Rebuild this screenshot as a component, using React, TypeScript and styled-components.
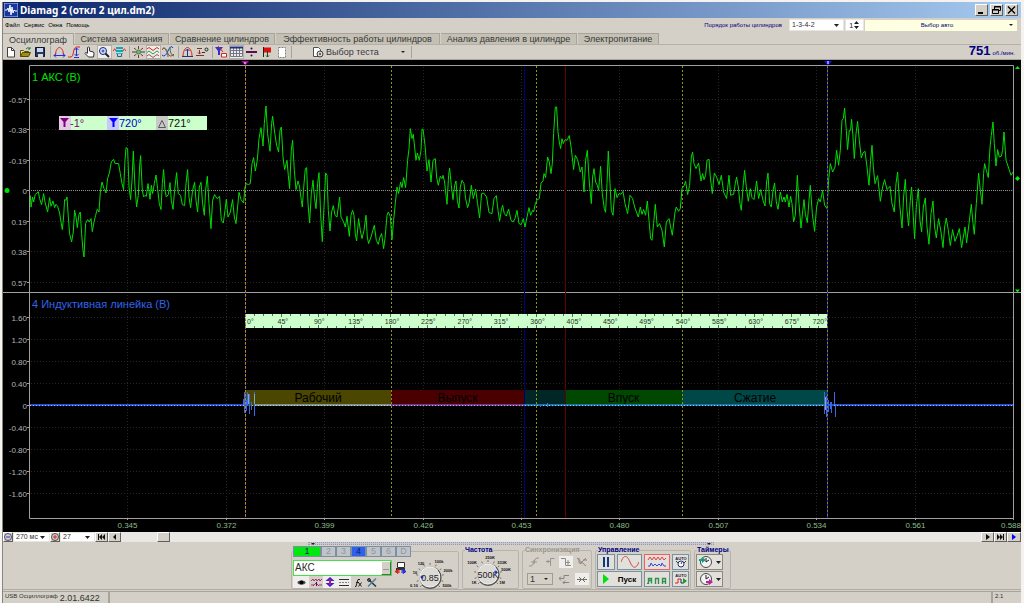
import React from "react";
import styled, { createGlobalStyle, css } from "styled-components";

const face = "#d4d0c8";
const navy = "#000080";
const sans = `"Liberation Sans", Arial, sans-serif`;

const GlobalStyle = createGlobalStyle`
  *, *::before, *::after { box-sizing: border-box; }
  body { margin: 0; background: #f4f3f0; font-family: ${sans}; color: #000; }
  button, input, select { font-family: inherit; color: inherit; margin: 0; border-radius: 0; }
  button { padding: 0; }
`;

const raised = css`
  background: ${face};
  border: 1px solid;
  border-color: #fff #606060 #606060 #fff;
`;

const Center = css`
  display: flex;
  align-items: center;
  justify-content: center;
`;

const Window = styled.div`
  margin: 2px 3px 0 2px;
  border-left: 1px solid #86847e;
  background: ${face};
`;

/* ---------- title and menu ---------- */

const TitleBar = styled.header`
  display: flex;
  align-items: center;
  gap: 2px;
  height: 16px;
  padding: 0 3px 0 1px;
  background: linear-gradient(90deg, #0a246a, #a6caf0);
`;

const Title = styled.h1`
  flex: 1;
  margin: 0;
  color: #fff;
  font: 700 10px/14px "Noto Sans", ${sans};
`;

const CaptionButtons = styled.div`
  display: flex;
  gap: 2px;
`;

const CaptionButton = styled.button`
  ${raised}
  ${Center}
  width: 13px;
  height: 12px;
`;

const MenuRow = styled.div`
  display: flex;
  justify-content: space-between;
  height: 15px;
  padding: 1px 4px 0 2px;
`;

const MenuBar = styled.nav`
  display: flex;
  align-items: center;
  gap: 4px;
  height: 12px;
`;

const MenuItem = styled.button`
  border: 0;
  background: none;
  font-size: 6px;
  line-height: 8px;
`;

const EngineBar = styled.div`
  display: flex;
  align-items: center;
  gap: 1px;
  height: 12px;
  color: ${navy};
`;

const EngineLabel = styled.label`
  margin-right: 6px;
  font-size: 6px;
  line-height: 8px;
`;

const Combo = styled.div<{ $w: number; $h: number; $flat?: boolean }>`
  display: grid;
  align-items: center;
  width: ${(p) => p.$w}px;
  height: ${(p) => p.$h}px;
  background: ${(p) => (p.$flat ? face : "#fff")};
  border: ${(p) => (p.$flat ? "1px solid #a09c94" : "1px solid #e8e6e0")};
  > * { grid-area: 1 / 1; }
  > svg { justify-self: end; margin-right: 4px; pointer-events: none; }
`;

const Select = styled.select<{ $size: number }>`
  width: 100%;
  padding: 0 2px;
  border: 0;
  outline: 0;
  background: none;
  appearance: none;
  font-size: ${(p) => p.$size}px;
  line-height: 8px;
  color: #303030;
`;

const Spin = styled.input`
  width: 100%;
  padding: 0 3px;
  border: 0;
  background: none;
  appearance: textfield;
  font-size: 8px;
  line-height: 9px;
  color: #303030;
  &::-webkit-inner-spin-button { appearance: none; }
`;

const CarButton = styled.button`
  display: grid;
  grid-template-columns: 1fr 8px;
  align-items: center;
  width: 152px;
  height: 11px;
  border: 0;
  background: #ffffe1;
  color: ${navy};
  font-size: 6px;
  line-height: 8px;
`;

/* ---------- tabs and toolbar ---------- */

const Tabs = styled.div`
  display: flex;
  align-items: flex-end;
  gap: 1px;
  height: 12px;
  border-bottom: 1px solid #b4b0a8;
`;

const Tab = styled.button<{ $w: number; $on?: boolean }>`
  width: ${(p) => p.$w}px;
  height: ${(p) => (p.$on ? 12 : 11)}px;
  margin-bottom: ${(p) => (p.$on ? -1 : 0)}px;
  border: solid #a8a49c;
  border-width: 1px 1px 0 0;
  background: ${(p) => (p.$on ? face : "#c4c0b4")};
  color: #383838;
  font-size: 9px;
  line-height: 10px;
  white-space: nowrap;
`;

const Toolbar = styled.div`
  display: flex;
  align-items: center;
  height: 15px;
  border-bottom: 1px solid #aaa69e;
`;

const Tool = styled.button<{ $on?: boolean }>`
  ${Center}
  width: 15px;
  height: 14px;
  border: ${(p) => (p.$on ? "1px solid #b4b0a8" : "0")};
  background: ${(p) => (p.$on ? "#eeedea" : "none")};
`;

const Divider = styled.span`
  width: 1px;
  height: 12px;
  margin: 0 1px 0 2px;
  background: #a8a49c;
`;

const TestButton = styled.button`
  display: flex;
  align-items: center;
  gap: 2px;
  width: 116px;
  height: 14px;
  padding: 0 4px 0 19px;
  border: 0;
  background: none;
  color: #383838;
  font-size: 9px;
  line-height: 11px;
  > :last-child { margin-left: auto; }
`;

const Rpm = styled.output`
  display: flex;
  align-items: baseline;
  gap: 2px;
  margin-left: auto;
  padding-right: 6px;
  color: ${navy};
  font-size: 6px;
  line-height: 14px;
  b { font-size: 13px; }
`;

/* ---------- chart ---------- */

const Chart = styled.svg`
  display: block;
  width: 100%;
  height: auto;
  background: #000;
  font-family: ${sans};
`;

const YLabel = styled.text`
  font-size: 8px;
  fill: #b4b4b4;
  text-anchor: end;
`;

const XLabel = styled.text`
  font-size: 8px;
  fill: #8cbc8c;
`;

const ChannelLabel = styled.text`
  font-size: 11px;
`;

const BandLabel = styled.text`
  font-size: 12px;
  text-anchor: middle;
`;

const RulerLabel = styled.text`
  font-size: 7px;
  fill: #203020;
`;

const ReadoutLabel = styled.text`
  font-size: 11px;
`;

// Samples are stored in thirds of a unit, in three blocks with their own start.
const blocks: [number, string][] = [
  [0, "90,405 92,440 97,410 100,425 105,402 110,398 114,394 118,415 124,433 130,400 134,425 142,455 148,412 152,438 158,422 163,442 167,432 172,438 178,458 182,485 186,508 190,470 193,418 197,420 200,410 204,470 208,520 214,545 219,515 223,450 227,470 231,502 236,462 240,455 244,520 248,570 251,590 256,490 262,478 267,485 272,475 276,514 281,485 286,465 291,447 296,455 300,395 305,365 311,385 317,398 322,355 328,335 333,305 340,297 344,310 355,310 360,340 365,370 370,388 374,300 377,262 382,265 386,380 391,418 395,360 399,272 404,380 409,440 414,405 418,320 421,286 426,390 430,410 434,405 438,408 443,370 449,417 453,375 457,400 462,370 467,344 472,385 477,430 482,448 486,370 490,328 494,390 498,410 504,403 509,367 513,420 518,447 523,390 529,337 534,400 541,405 546,433 553,436 557,370 562,328 566,410 571,442 577,390 583,366 587,420 592,455 597,380 602,366 607,430 612,465 616,390 621,348 626,430 632,505 637,420 643,403 650,415 658,408 663,480 669,488 674,450 678,417 683,470 690,455 697,418 702,470 707,490 712,440 716,396 722,418 730,428 734,380 738,370 744,373 750,370 755,310 760,292 765,332 771,300 776,235 782,202 788,257 792,190 797,137 802,220 809,273 814,190 817,168 823,215 829,255 835,275 839,210 843,200 848,290 853,328 860,300 864,345 868,385 873,270 877,240 882,330 887,388 893,362 898,380 903,420 906,440 911,370 915,325 919,322 923,430 928,488 933,400 938,360 943,415 947,445 952,370 956,337 961,460 966,544 971,440 976,338 980,345 984,450 989,512 994,455 999,436 1004,465 1010,470 1018,410 1022,470 1030,485 1035,500 1040,468 1047,528 1052,465 1057,450 1061,465 1065,520 1069,542 1075,475 1080,510 1085,535 1091,510 1097,465 1101,530 1105,550 1112,530 1122,495 1128,540 1134,552 1139,530 1144,520 1150,565 1154,535 1160,465 1164,455 1170,468"],
  [1140, "35,538 40,480 45,430 50,380 55,400 61,365 65,382 70,352 76,382 82,300 86,265 90,205 95,235 99,222 103,260 107,300 111,278 117,300 122,270 125,208 128,206 134,255 140,332 146,298 152,365 158,300 165,295 169,350 174,375 180,348 185,355 188,345 193,365 197,405 200,432 205,345 208,323 213,375 218,418 223,375 227,362 231,420 236,443 240,380 245,360 251,370 256,415 262,442 267,425 273,375 279,415 286,386 292,430 298,473 304,400 310,398 319,410 326,457 335,460 341,415 348,406 353,450 358,483 363,450 367,435 372,460 378,467 385,446 392,480 398,485 404,475 410,450 416,490 423,493 429,475 434,500 440,470 446,442 451,465 457,450 460,455 465,430 471,418 477,415 482,368 488,362 491,340 496,352 502,290 507,305 512,340 516,310 520,220 525,140 529,140 533,215 537,245 541,265 545,235 549,250 554,238 560,240 567,226 573,265 580,328 585,285 592,298 600,335 605,320 611,395 616,300 621,270 627,365 633,430 637,350 641,325 646,365 651,375 655,390 661,318 666,400 672,445 676,456 680,370 684,272 689,370 693,450 698,465 704,385 710,412 716,400 722,402 728,393 734,430 742,460 749,405 757,415 763,440 774,470 780,440 785,462 790,448 796,465 801,422 806,480 811,535 815,540 820,490 825,432 831,500 838,490 845,510 852,560 858,485 866,475 876,525 884,455 888,440 895,453 900,445 905,385 912,375 916,363 922,403 928,375 933,290 937,275 941,310 947,325 955,308 962,362 967,340 971,358 976,345 980,300 986,297 990,350 996,400"],
  [2100, "42,338 49,350 56,373 63,345 70,395 79,415 86,345 91,405 100,402 105,370 109,350 114,380 119,430 123,450 128,380 133,330 138,380 144,423 150,385 155,412 161,418 169,362 175,415 181,388 188,420 194,437 199,365 203,338 208,430 213,440 218,390 223,368 228,425 233,447 240,395 246,425 251,410 255,425 260,402 266,440 271,408 275,430 280,485 285,465 291,345 296,430 302,503 307,455 311,418 315,460 321,487 326,420 330,375 336,460 343,513 349,440 355,415 360,425 367,390 373,435 380,445 385,360 390,310 397,335 404,320 409,270 415,315 420,270 425,180 429,175 433,143 438,210 442,268 447,210 451,210 454,177 458,230 462,295 467,220 472,183 477,240 483,293 488,278 494,273 500,320 506,375 511,300 515,255 519,320 524,370 532,346 540,423 547,380 553,358 560,388 569,378 575,430 582,455 587,370 592,335 598,430 605,503 610,410 615,357 620,450 625,497 630,420 634,380 639,470 643,535 648,440 654,385 659,480 664,515 669,440 675,413 680,500 686,552 692,460 698,422 703,500 708,533 715,475 722,515 728,562 733,500 738,473 744,510 750,556 757,508 764,543 771,525 777,505 784,562 789,530 794,500 799,548 806,490 813,432 818,490 822,522 828,430 835,338 840,390 845,432 850,340 853,310 858,330 864,352 869,260 873,225 878,185 882,250 887,317 892,268 897,290 903,288 907,270 911,215 917,300 924,320 932,345 938,335"],
];

const trace = blocks
  .flatMap(([start, data]) =>
    data.split(" ").map((pair) => {
      const [x, y] = pair.split(",").map(Number);
      return `${((x + start) / 3 + 0.3).toFixed(1)},${(y / 3 + 60.3).toFixed(1)}`;
    }),
  )
  .join(" ");

const timeTicks: [number, string][] = [
  [127.5, "0.345"], [226.5, "0.372"], [324.5, "0.399"], [423.5, "0.426"], [521.5, "0.453"],
  [619.5, "0.480"], [718.5, "0.507"], [816.5, "0.534"], [915.5, "0.561"], [1013.5, "0.588"],
];
const upperTicks: [number, string][] = [
  [99.5, "-0.57"], [129.5, "-0.38"], [160.5, "-0.19"], [190.5, "0"], [221.5, "0.19"], [251.5, "0.38"], [282.5, "0.57"],
];
const lowerTicks: [number, string][] = [
  [317.5, "1.60"], [339.5, "1.20"], [361.5, "0.80"], [383.5, "0.40"], [405.5, "0"],
  [427.5, "-0.40"], [449.5, "-0.80"], [471.5, "-1.20"], [493.5, "-1.60"],
];
const strokes: [number, number, string, string][] = [
  [245, 391, "#4b4600", "Рабочий"],
  [391, 524, "#4a0000", "Выпуск"],
  [524, 565, "#002626", ""],
  [565, 682, "#004800", "Впуск"],
  [682, 828, "#004848", "Сжатие"],
];

const degX = (d: number) => 245.5 + d * 0.8083;

function Oscillogram() {
  return (
    <Chart viewBox="3 60 1018 472" role="img" aria-label="Осциллограмма">
      <g stroke="#262626" strokeDasharray="1 2">
        {timeTicks.slice(0, 9).map(([x]) => <path key={x} d={`M${x} 67V518`} />)}
        {[...upperTicks, ...lowerTicks].map(([y]) => <path key={y} d={`M31 ${y}H1013`} />)}
      </g>
      <path d="M29 190.5H1013" stroke="#8c8c8c" strokeDasharray="1 1" />
      <g stroke="#a0a0a0" fill="none">
        <path d="M29.5 518.5V65.5H1013.5V518.5ZM3 292.5H1021" />
        {[...upperTicks, ...lowerTicks].map(([y]) => <path key={y} d={`M27 ${y}h2`} />)}
        {timeTicks.map(([x]) => <path key={x} d={`M${x} 518v2`} />)}
      </g>

      {upperTicks.map(([y, t]) => <YLabel key={y} x="27" y={y + 3}>{t}</YLabel>)}
      {lowerTicks.map(([y, t]) => <YLabel key={y} x="27" y={y + 3}>{t}</YLabel>)}
      {timeTicks.map(([x, t]) => {
        const last = x > 1000;
        return <XLabel key={x} x={last ? 1021 : x} y="528" textAnchor={last ? "end" : "middle"}>{t}</XLabel>;
      })}

      {strokes.map(([a, b, fill]) => <rect key={a} x={a} y="390" width={b - a} height="16" fill={fill} />)}
      {strokes.map(([a, b, , t]) => <BandLabel key={a} x={(a + b) / 2} y="402">{t}</BandLabel>)}

      <path d="M524.5 66V518" stroke="#000078" />
      <path d="M565.5 66V518" stroke="#600000" />
      <path d="M391.5 66V518M536.5 66V518M682.5 66V518" stroke="#94941a" strokeDasharray="2 2" />

      <polyline points={trace} fill="none" stroke="#00dc00" />

      <g strokeWidth="2">
        <path d="M30 405H245M828 405H1013" stroke="#2450d8" />
        <path d="M255 405H391" stroke="#7c9488" />
        <path d="M391 405H524" stroke="#70388c" />
        <path d="M524 405H828" stroke="#1c70a8" />
      </g>
      <path d="M30 405.5H1013" stroke="#e0e8ff" strokeDasharray="1 2" opacity=".7" />
      <path d="M243.5 405V399M244.5 413V392M246.5 411V400M247.5 406V392M249.5 414V394M251.5 410V402M254.5 416V392M824.5 414V392M826.5 417V396M828.5 412V400M830.5 409V402M831.5 413V402M834.5 405V392M835.5 417V404" stroke="#3868e8" />
      <path d="M248.5 404V394M254.5 404V394M825.5 410V397" stroke="#80a8c0" />
      <path d="M540.5 404V407M547.5 403V407" stroke="#3868e8" />

      <rect x="245" y="314" width="583" height="14" fill="#ccffcc" />
      <g stroke="#507050">
        {Array.from({ length: 64 }, (_, i) => {
          const x = Math.floor(degX(i * 11.25)) + 0.5;
          const n = i % 4 === 0 ? 3 : 2;
          return <path key={i} d={`M${x} 314v${n}M${x} 328v-${n}`} />;
        })}
      </g>
      {Array.from({ length: 17 }, (_, i) => (
        <RulerLabel
          key={i}
          x={i === 0 ? 247 : i === 16 ? 827 : degX(i * 45) + 1}
          y="324"
          textAnchor={i === 0 ? "start" : i === 16 ? "end" : "middle"}
        >
          {i * 45}°
        </RulerLabel>
      ))}

      <path d="M245.5 66V518" stroke="#a09c18" strokeDasharray="2 2" />
      <path d="M245.5 68V518" stroke="#b040b0" strokeDasharray="1 3" />
      <path d="M827.5 66V518" stroke="#84841c" strokeDasharray="2 2" />
      <path d="M827.5 68V518" stroke="#2020c8" strokeDasharray="2 2" />
      <path d="M241 61H249L245.500 65.500Z" fill="#b000b0" />
      <path d="M824 61H832L828 65.500Z" fill="#1010ff" />
      <path d="M245 62v2M828 61v3" stroke="#fff" />

      <circle cx="7" cy="190.500" r="2.500" fill="#00e000" />
      <path d="M1015 69L1017.500 66L1020 69ZM1015 289.500H1020L1017.500 292.500ZM1015 178.500L1017.500 176L1020 178.500L1017.500 181Z" fill="#00f000" />

      <ChannelLabel x="32" y="81" fill="#00e000">1 АКС (В)</ChannelLabel>
      <ChannelLabel x="32" y="308" fill="#3264e8">4 Индуктивная линейка (В)</ChannelLabel>

      <rect x="59" y="116" width="148" height="14" fill="#ccffcc" />
      <rect x="59" y="116" width="12" height="14" fill="#e4c8e4" />
      <rect x="107" y="116" width="12" height="14" fill="#c8c8ff" />
      <rect x="156" y="116" width="12" height="14" fill="#c8c8c8" />
      <path d="M60 118H69L65.500 122V127H63.500V122Z" fill="#800080" />
      <path d="M109 118H118L114.500 122V127H112.500V122Z" fill="#0000ff" />
      <path d="M158.500 127.500H165.500L162 120.500Z" fill="none" stroke="#585858" />
      <ReadoutLabel x="70" y="127" fill="#800080">-1°</ReadoutLabel>
      <ReadoutLabel x="119" y="127" fill="#0000d0">720°</ReadoutLabel>
      <ReadoutLabel x="168" y="127" fill="#101010">721°</ReadoutLabel>
    </Chart>
  );
}

/* ---------- scroll row ---------- */

const ScrollRow = styled.div`
  display: flex;
  height: 10px;
`;

const StepButton = styled.button<{ $w?: number }>`
  ${raised}
  ${Center}
  width: ${(p) => p.$w ?? 13}px;
  height: 10px;
  flex: none;
`;

const Track = styled.div`
  flex: 1;
  padding-left: 36px;
  background: #e9e7e3;
`;

const Thumb = styled.div`
  ${raised}
  width: 13px;
  height: 10px;
`;

/* ---------- control panel ---------- */

const Panel = styled.section`
  display: flex;
  flex-direction: column;
  align-items: center;
  height: 48px;
  padding-right: 2px;
  border-bottom: 1px solid #b0aca4;
`;

const Splitter = styled.div`
  display: flex;
  justify-content: space-between;
  align-items: center;
  width: 406px;
  height: 3px;
  padding: 0 2px;
  border: 1px dotted #9a98a8;
  background: #c8c8d4;
`;

const Groups = styled.div`
  display: flex;
  gap: 3px;
  padding-top: 1px;
`;

const Group = styled.fieldset<{ $w: number }>`
  width: ${(p) => p.$w}px;
  height: 43px;
  min-width: 0;
  margin: 0;
  padding: 0 1px;
  border: 1px solid #b8b4ac;
  border-radius: 2px;
`;

const Legend = styled.legend<{ $muted?: boolean }>`
  margin-left: 1px;
  padding: 0;
  color: ${(p) => (p.$muted ? "#98948c" : navy)};
  font-size: 7px;
  font-weight: 700;
  line-height: 8px;
`;

const ChannelStrip = styled.legend`
  display: flex;
  padding: 0;
`;

const ChannelButton = styled.button<{ $tone?: "green" | "blue" }>`
  width: ${(p) => (p.$tone === "green" ? 28 : 15)}px;
  height: 11px;
  border: 1px solid #7890a0;
  background: ${(p) => (p.$tone === "green" ? "#00e810" : p.$tone === "blue" ? "#3060f0" : "#c0c4c8")};
  color: ${(p) => (p.$tone ? "#082850" : "#90989c")};
  font-size: 9px;
  line-height: 9px;
`;

const ChannelBody = styled.div`
  display: flex;
  justify-content: space-between;
  padding-right: 3px;
`;

const ChannelForm = styled.div`
  display: grid;
  grid-template-rows: 17px 12px;
  padding-top: 2px;
`;

const NameRow = styled.div`
  display: flex;
  align-items: center;
  gap: 3px;
`;

const NameField = styled.div`
  display: flex;
  width: 99px;
  height: 16px;
  border: 1px solid #48e048;
  background: #fff;
`;

const NameInput = styled.input`
  flex: 1;
  min-width: 0;
  padding: 0 1px;
  border: 0;
  font-size: 10px;
  color: #282828;
`;

const MoreButton = styled.button`
  ${raised}
  width: 10px;
  font-size: 7px;
  line-height: 8px;
`;

const IconButton = styled.button<{ $lit?: boolean; $w?: number }>`
  ${Center}
  width: ${(p) => p.$w ?? 14}px;
  height: 12px;
  border: 0;
  background: ${(p) => (p.$lit ? "#efeeec" : "none")};
`;

const Row = styled.div<{ $gap?: number }>`
  display: flex;
  align-items: center;
  gap: ${(p) => p.$gap ?? 0}px;
`;

const ButtonGrid = styled.div<{ $cols: string }>`
  display: grid;
  grid-template-columns: ${(p) => p.$cols};
  grid-auto-rows: 16px;
  gap: 1px 2px;
`;

const ActionButton = styled.button<{ $span?: number; $edge?: string }>`
  ${Center}
  gap: 9px;
  grid-column: span ${(p) => p.$span ?? 1};
  border: 1px solid ${(p) => p.$edge ?? "#7890a0"};
  background: #e2e0da;
  font-size: 8px;
  font-weight: 700;
  line-height: 9px;
`;

const SyncGrid = styled.div`
  display: grid;
  gap: 5px;
  padding: 2px 3px;
`;

const Dial = styled.svg`
  display: block;
  font-family: ${sans};
`;

/* ---------- status bar ---------- */

const StatusBar = styled.footer`
  display: flex;
  height: 12px;
  margin-top: 1px;
  border-top: 1px solid #a8a49c;
  overflow: hidden;
`;

const StatusCell = styled.div<{ $w?: number }>`
  display: flex;
  gap: 2px;
  ${(p) => (p.$w ? `width: ${p.$w}px;` : "flex: 1;")}
  padding-left: 2px;
  border-right: 2px solid #a8a49c;
  font-size: 6px;
  line-height: 9px;
  color: #303030;
  &:last-child { border-right: 0; }
`;

const Version = styled.span`
  font-size: 9px;
  line-height: 13px;
`;

/* ---------- icons ---------- */

const Arrow = () => <svg width="5" height="3" viewBox="0 0 5 3"><path d="M0 0H5L2.500 3Z" fill="#202020" /></svg>;
const SmallArrow = () => <svg width="4" height="2" viewBox="0 0 4 2"><path d="M0 0H4L2 2Z" fill="#202020" /></svg>;

function Glyph({ children, w = 13, h = 12 }: { children: React.ReactNode; w?: number; h?: number }) {
  return <svg width={w} height={h} viewBox={`0 0 ${w} ${h}`} fill="none" aria-hidden="true">{children}</svg>;
}

const red = "#e02020";
const blue = "#2030e0";

type ToolDef = { name: string; on?: boolean; icon: React.ReactNode } | null;
const tools: ToolDef[] = [
  { name: "Новый", icon: <><path d="M3.500 1.500h4l3 3v6.500h-7Z" fill="#fff" stroke="#404040" /><path d="M7.500 1.500v3h3" stroke="#404040" /></> },
  { name: "Открыть", icon: <><path d="M1.500 10.500v-6h3l1 1h4v2" fill="#f0e090" stroke="#605010" /><path d="M1.500 10.500l2-4h8l-2 4Z" fill="#a09010" stroke="#504800" /><path d="M7 3q2-3 4 0m0-2v2h-2" stroke="#208030" /></> },
  { name: "Сохранить", icon: <><path d="M1.500 1.500h9v9h-9Z" fill="#283860" stroke="#101830" /><path d="M3 2h6v4H3Z" fill="#c8d8f0" /><path d="M4 8h5v3H4Z" fill="#d8d8d8" /></> },
  null,
  { name: "Период", icon: <><path d="M2.500 9C2.500 4 5 1.500 6.500 1.500S10.500 4 10.500 9" stroke={red} /><path d="M1 9.500h11M3 7.500L1 9.500L3 11.500M10 7.500L12 9.500L10 11.500" stroke={blue} /></> },
  { name: "Амплитуда", icon: <><path d="M0 11h3Q5 11 5.500 6T9 1h3" stroke={red} /><path d="M8.500 2v8M6.500 4l2-2 2 2M6.500 8l2 2 2-2M6 11.500h5" stroke={blue} /></> },
  { name: "Рука", icon: <path d="M4.500 7V1.500Q5.500.500 6.500 1.500V5l4 1q1 1 0 5h-5L2 7.500q0-2 2.500 0" fill="#fff" stroke="#303030" /> },
  { name: "Лупа", on: true, icon: <><circle cx="5" cy="5" r="3.500" fill="#d0e8ff" stroke="#202060" /><path d="M3.500 5h3M5 3.500v3" stroke={blue} /><path d="M7.500 7.500L11 11" stroke="#202030" strokeWidth="2" /></> },
  { name: "Датчик", icon: <><path d="M3 2h7M3 5h7" stroke="#10a8b8" strokeWidth="2" /><path d="M3 7.500h7" stroke="#10c0d0" /><path d="M0 5q2-4 3 0M10 5q1-4 3 0" stroke={red} /><path d="M4.500 8v2.500h4V8" stroke="#107080" /></> },
  null,
  { name: "Смещение", icon: <><circle cx="6.500" cy="6" r="2" stroke="#209040" fill="#80b080" /><path d="M6.500 0v3M6.500 9v3M2 2l2.500 2M11 2L8.500 4M2 10l2.500-2M11 10L8.500 8" stroke="#803030" /><path d="M0 6h4M9 6h4" stroke="#404040" /></> },
  { name: "Раздельно", on: true, icon: <><path d="M0 3q2-3 4 0t4 0 4 0" stroke={red} /><path d="M0 6.500q2-3 4 0t4 0 4 0" stroke="#20a040" /><path d="M0 10q2-3 4 0t4 0 4 0" stroke="#a05060" /></> },
  { name: "Наложение", icon: <><path d="M0 4Q2-1 5 6T12 8" stroke={red} /><path d="M0 9Q3 12 6 5T11 2" stroke={blue} /><path d="M1 2q5 0 5 9M8 1q0 8 4 9" stroke="#208060" /></> },
  null,
  { name: "Ноль", icon: <><path d="M2 10C2 5 4.500 1.500 6.500 1.500S11 5 11 10" stroke={red} /><path d="M1 10.500h11M6.500 3v8M4.500 5l2-2 2 2" stroke="#283080" /></> },
  { name: "Сброс", icon: <><path d="M1 2.500h5M0 9.500h8M3.500 4v4M2 6.500l1.500 1.500L5 6.500" stroke="#803030" /><path d="M6 6.500h3" stroke="#303030" /><circle cx="10.500" cy="3.500" r="1.500" stroke="#202020" /></> },
  null,
  { name: "Метки", icon: <><path d="M0 1h8L5 5v4H3V5Z" fill="#3030d0" /><path d="M3 0l5 6" stroke={red} /><path d="M6.500 7.500h5v3.500h-5Z" stroke={red} fill="#fff" /></> },
  { name: "Таблица", on: true, icon: <><path d="M.500 1.500h12v9H.500ZM.500 4.500h12M.500 7.500h12M3.500 2v9M6.500 2v9M9.500 2v9" stroke="#707888" /><path d="M0 1.500h13" stroke="#203080" strokeWidth="2" /></> },
  { name: "Деление", icon: <><path d="M1 6h11" stroke="#600850" strokeWidth="2" /><circle cx="6.500" cy="2.500" r="1" fill="#301030" /><circle cx="6.500" cy="9.500" r="1" fill="#301030" /></> },
  { name: "Флаг", icon: <><path d="M3.500 1v10" stroke="#202020" /><path d="M4 1.500h7v5H4Z" fill="#e01010" /><path d="M7.500 5v6M6 9.500L7.500 11L9 9.500" stroke="#105010" /></> },
  { name: "Отчёт", icon: <path d="M3.500 1.500h7v10h-7Z" fill="#fff" stroke="#808080" strokeDasharray="2 1" /> },
];

const play = "M1 0V6L5 3Z";

function Knob({ value, marks, angle }: { value: string; marks: [number, number, string][]; angle: number }) {
  const dots = Array.from({ length: 11 }, (_, i) => ((i * 27 - 225) * Math.PI) / 180);
  const a = (angle * Math.PI) / 180;
  return (
    <Dial width="48" height="34" viewBox="0 0 48 34">
      {dots.map((t) => (
        <path
          key={t}
          d={`M${24 + 12 * Math.cos(t)} ${20 + 12 * Math.sin(t)}L${24 + 14 * Math.cos(t)} ${20 + 14 * Math.sin(t)}`}
          stroke="#707070"
        />
      ))}
      <circle cx="24.500" cy="20.500" r="11" fill="#8c8880" />
      <circle cx="24" cy="20" r="10" fill="#dcdad6" stroke="#f4f4f2" />
      <path d="M32 13A10.500 10.500 0 0 1 16 28" stroke="#484848" fill="none" />
      <circle cx={24 + 8 * Math.cos(a)} cy={20 + 8 * Math.sin(a)} r="1.500" fill="#2040f0" />
      <text x="24" y="24" textAnchor="middle" fontSize="9" fill="#202020">{value}</text>
      {marks.map(([x, y, t]) => (
        <text key={t} x={x} y={y} textAnchor="middle" fontSize="4" fontWeight="700" fill="#101010">{t}</text>
      ))}
    </Dial>
  );
}

const tabs: [string, number][] = [
  ["Осциллограф", 71], ["Система зажигания", 94], ["Сравнение цилиндров", 105],
  ["Эффективность работы цилиндров", 164], ["Анализ давления в цилиндре", 136], ["Электропитание", 81],
];

export default function App() {
  return (
    <>
      <GlobalStyle />
      <Window>
        <TitleBar>
          <Glyph w={14} h={14}>
            <path d="M0 0h14v14H0Z" fill="#1838a0" stroke="#c0d0f0" />
            <path d="M1 7h2l1-2 1 4 1-7 1 10 1-8 1 6 1-3 1 1h2" stroke="#fff" />
          </Glyph>
          <Title>Diamag 2 (откл 2 цил.dm2)</Title>
          <CaptionButtons>
            <CaptionButton aria-label="Свернуть"><Glyph w={9} h={8}><path d="M1 7h5" stroke="#000" strokeWidth="2" /></Glyph></CaptionButton>
            <CaptionButton aria-label="Восстановить"><Glyph w={9} h={8}><path d="M2.500 3V.500h6v4H7M.500 3.500h6v4h-6ZM2 1h7M0 4h7" stroke="#000" /></Glyph></CaptionButton>
            <CaptionButton aria-label="Закрыть"><Glyph w={9} h={8}><path d="M1 .500l7 7M8 .500l-7 7" stroke="#000" strokeWidth="1.400" /></Glyph></CaptionButton>
          </CaptionButtons>
        </TitleBar>

        <MenuRow>
          <MenuBar>
            {["Файл", "Сервис", "Окна", "Помощь"].map((m) => <MenuItem key={m}>{m}</MenuItem>)}
          </MenuBar>
          <EngineBar>
            <EngineLabel htmlFor="order">Порядок работы цилиндров</EngineLabel>
            <Combo $w={55} $h={12}>
              <Select id="order" $size={7}><option>1-3-4-2</option></Select>
              <Arrow />
            </Combo>
            <Combo $w={19} $h={12}>
              <Spin type="number" aria-label="Цилиндр" defaultValue={1} />
              <Glyph w={5} h={8}><path d="M0 3H5L2.500 0ZM0 5H5L2.500 8Z" fill="#202020" /></Glyph>
            </Combo>
            <CarButton><span>Выбор авто</span><SmallArrow /></CarButton>
          </EngineBar>
        </MenuRow>

        <Tabs role="tablist">
          {tabs.map(([t, w], i) => <Tab key={t} role="tab" aria-selected={i === 0} $w={w} $on={i === 0}>{t}</Tab>)}
        </Tabs>

        <Toolbar>
          {tools.map((t, i) =>
            t ? <Tool key={i} aria-label={t.name} $on={t.on}><Glyph>{t.icon}</Glyph></Tool> : <Divider key={i} />,
          )}
          <Divider />
          <TestButton>
            <Glyph w={12}>
              <path d="M1.500 1.500h5l2 2v7h-7Z" fill="#fff" stroke="#505050" />
              <circle cx="8" cy="8" r="3" fill="#d8d8d8" stroke="#404040" /><circle cx="8" cy="8" r="1" fill="#404040" />
            </Glyph>
            <span>Выбор теста</span>
            <SmallArrow />
          </TestButton>
          <Divider />
          <Rpm><b>751</b>об./мин.</Rpm>
        </Toolbar>

        <Oscillogram />

        <ScrollRow>
          <StepButton $w={10} aria-label="Уменьшить"><Glyph w={8} h={8}><circle cx="4" cy="4" r="3.500" stroke="#505070" /><path d="M2 4h4" stroke={blue} /></Glyph></StepButton>
          <Combo $w={37} $h={10}>
            <Select $size={7} aria-label="Развёртка"><option>270 мс</option></Select>
            <Arrow />
          </Combo>
          <StepButton $w={10} aria-label="Увеличить"><Glyph w={8} h={8}><circle cx="4" cy="4" r="3.500" stroke="#505050" /><path d="M2 4h4M4 2v4" stroke={red} /></Glyph></StepButton>
          <Combo $w={35} $h={10}>
            <Select $size={7} aria-label="Деление"><option>27</option></Select>
            <Arrow />
          </Combo>
          <StepButton aria-label="В начало"><Glyph w={7} h={6}><path d="M0 0h1v6H0ZM4 0v6L1 3ZM7 0v6L4 3Z" fill="#101010" /></Glyph></StepButton>
          <StepButton aria-label="Назад"><Glyph w={5} h={6}><path d="M4 0V6L1 3Z" fill="#101010" /></Glyph></StepButton>
          <Track><Thumb /></Track>
          <StepButton aria-label="Вперёд"><Glyph w={5} h={6}><path d={play} fill="#101010" /></Glyph></StepButton>
          <StepButton aria-label="В конец"><Glyph w={7} h={6}><path d="M0 0v6l3-3ZM3 0v6l3-3ZM6 0h1v6H6Z" fill="#101010" /></Glyph></StepButton>
          <StepButton $w={14} aria-label="Воспроизвести"><Glyph w={6} h={6}><path d={play} fill="#0000ff" /></Glyph></StepButton>
        </ScrollRow>

        <Panel>
          <Splitter><SmallArrow /><SmallArrow /></Splitter>
          <Groups>
            <Group $w={168}>
              <ChannelStrip>
                <ChannelButton $tone="green">1</ChannelButton>
                <ChannelButton>2</ChannelButton>
                <ChannelButton>3</ChannelButton>
                <ChannelButton $tone="blue">4</ChannelButton>
                <ChannelButton>5</ChannelButton>
                <ChannelButton>6</ChannelButton>
                <ChannelButton>D</ChannelButton>
              </ChannelStrip>
              <ChannelBody>
                <ChannelForm>
                  <NameRow>
                    <NameField>
                      <NameInput aria-label="Имя канала" defaultValue="АКС" />
                      <MoreButton aria-label="Выбрать канал">...</MoreButton>
                    </NameField>
                    <Glyph w={11}>
                      <path d="M2.500.500h7v5h-7Z" fill="#fff" stroke="#303030" />
                      <path d="M1 7h9" stroke="#303030" strokeWidth="2" />
                      <path d="M4 8v3M0 9.500l3-2v4Z" fill={red} stroke={red} />
                      <path d="M7 8v3M11 9.500L8 7.500v4Z" fill={blue} stroke={blue} />
                    </Glyph>
                  </NameRow>
                  <Row>
                    <IconButton $lit $w={16} aria-label="Видимость"><Glyph w={9} h={7}><ellipse cx="4.500" cy="3.500" rx="4" ry="2" fill="#505050" /><circle cx="4.500" cy="3.500" r="2" fill="#000" /></Glyph></IconButton>
                    <IconButton aria-label="Фильтр"><Glyph w={11} h={9}><path d="M0 3l2-2 1 2 2-2 1 2 2-2 1 2 2-2M2 8l3-3 3 3M0 7h3M8 7h3" stroke="#a03070" /><path d="M5.500 4v4" stroke="#501050" /></Glyph></IconButton>
                    <IconButton $lit aria-label="Инверсия"><Glyph w={10} h={10}><path d="M5 0l4.500 4H.500ZM5 10l4.500-4H.500Z" fill="#3020d0" /><path d="M5 2v6" stroke="#c01080" strokeWidth="2" /></Glyph></IconButton>
                    <IconButton $lit aria-label="Связь"><Glyph w={10} h={7}><path d="M0 .500h10M0 6.500h10" stroke="#303030" /><path d="M0 3.500h10" stroke="#808080" strokeDasharray="2 1" /></Glyph></IconButton>
                    <IconButton aria-label="Функция"><Glyph w={8} h={9}><path d="M1 8.500h1L4 1.500h2M2 4.500h3M4.500 4.500l3 4M7.500 4.500l-3 4" stroke="#202020" /></Glyph></IconButton>
                    <IconButton aria-label="Настройка"><Glyph w={10} h={9}><path d="M1 1l8 7.500" stroke="#303030" strokeWidth="1.500" /><path d="M9 .500L1 8.500" stroke="#5080a0" strokeWidth="1.500" /><circle cx="2" cy="2" r="1.500" stroke="#303030" /></Glyph></IconButton>
                  </Row>
                </ChannelForm>
                <Knob
                  value="0.85"
                  angle={180}
                  marks={[[8, 30, "0.10"], [9, 17, "10"], [15, 8, "120"], [33, 6, "100k"], [42, 15, "200k"], [41, 30, "500k"]]}
                />
              </ChannelBody>
            </Group>

            <Group $w={57}>
              <Legend>Частота</Legend>
              <Knob
                value="500K"
                angle={-15}
                marks={[[8, 10, "100K"], [26, 5, "250K"], [38, 10, "333K"], [42, 17, "500K"], [38, 30, "1M"], [10, 30, "1K"]]}
              />
            </Group>

            <Group $w={70}>
              <Legend $muted>Синхронизация</Legend>
              <SyncGrid>
                <Row $gap={2}>
                  <IconButton aria-label="По фронту"><Glyph w={10} h={10}><path d="M0 9h2Q4 9 5 5T8 1h2M2 5h6M5 3v4" stroke="#98948c" /></Glyph></IconButton>
                  <IconButton aria-label="По спаду"><Glyph w={10} h={10}><path d="M1 4.500h4M5.500 9V1.500h4M3 3v3" stroke="#98948c" /></Glyph></IconButton>
                  <IconButton $lit aria-label="По уровню"><Glyph w={10} h={10}><path d="M0 1.500h4.500v7H10M4 5.500h5M7 3v6" stroke="#908c84" /></Glyph></IconButton>
                  <IconButton aria-label="По импульсу"><Glyph w={10} h={10}><path d="M0 1l9 8M9 1L3 7M2 1v5h3M6 3h4" stroke="#88847c" /></Glyph></IconButton>
                </Row>
                <Row $gap={4}>
                  <Combo $w={26} $h={12} $flat>
                    <Select $size={9} aria-label="Канал синхронизации"><option>1</option></Select>
                    <SmallArrow />
                  </Combo>
                  <IconButton aria-label="Задержка"><Glyph w={10} h={10}><path d="M0 4.500h5V1.500h5M4 8.500h6M6 6.500l-2 2 2 2M2 2.500l-2 2 2 2" stroke="#88847c" /></Glyph></IconButton>
                  <IconButton $lit aria-label="Центр"><Glyph w={10} h={7}><path d="M0 3.500h10M2 1l2.500 2.500L2 6M8 1L5.500 3.500L8 6" stroke="#706c64" /></Glyph></IconButton>
                </Row>
              </SyncGrid>
            </Group>

            <Group $w={96}>
              <Legend>Управление</Legend>
              <ButtonGrid $cols="18px 25px 26px 17px">
                <ActionButton aria-label="Пауза"><Glyph w={6} h={10}><path d="M1 0v10M5 0v10" stroke="#103880" strokeWidth="2" /></Glyph></ActionButton>
                <ActionButton aria-label="Синус"><Glyph w={18} h={12}><path d="M0 6C3-2 6-1 9 6S15 13 18 6" stroke="#d84040" /></Glyph></ActionButton>
                <ActionButton $edge="#f06060" aria-label="Непрерывно">
                  <Glyph w={20} h={12}>
                    <path d="M1 4l2-3 2 3 2-3 2 3 2-3 2 3 2-3 2 3 2-2" stroke="#e04040" />
                    <path d="M1 10h2l1-3 2 3 2-2 2 2 2-2 2 2 1-3 2 3h2" stroke="#4040e0" />
                  </Glyph>
                </ActionButton>
                <ActionButton aria-label="Автонастройка">
                  <Glyph w={12} h={12}>
                    <text x="6" y="4" textAnchor="middle" fontSize="4" fontWeight="700" fill="#202040">AUTO</text>
                    <circle cx="6" cy="8" r="3" fill="#fff" stroke="#203880" />
                    <path d="M1 5l2 2M11 5L9 7M6 8l1-2" stroke="#404040" />
                  </Glyph>
                </ActionButton>
                <ActionButton $span={2}>
                  <Glyph w={6} h={10}><path d="M0 0V10L6 5Z" fill="#00e010" /></Glyph>
                  Пуск
                </ActionButton>
                <ActionButton aria-label="Импульсы">
                  <Glyph w={20} h={9}><path d="M0 8.500h1.500V3.500h3v5M1.500 5.500h3M8.500 9V3.500h3V9M15.500 9V3.500h3V9M15.500 6.500h3" stroke="#309050" strokeWidth="1.400" /></Glyph>
                </ActionButton>
                <ActionButton aria-label="Автопуск">
                  <Glyph w={12} h={12}>
                    <text x="6" y="4" textAnchor="middle" fontSize="4" fontWeight="700" fill="#202040">AUTO</text>
                    <path d="M0 10h3V6h3" stroke={red} />
                    <path d="M6 6v4h2" stroke="#202080" />
                    <path d="M8 5v6l4-3Z" fill="#10a020" />
                  </Glyph>
                </ActionButton>
              </ButtonGrid>
            </Group>

            <Group $w={37}>
              <Legend>Таймеры</Legend>
              <ButtonGrid $cols="27px">
                {["#10a080", "#c020a0"].map((c, i) => (
                  <ActionButton key={c} $edge="#8c8880" aria-label={`Таймер ${i + 1}`}>
                    <Glyph w={23} h={14}>
                      <circle cx="8" cy="7" r="5.500" fill="#f4f4f4" stroke="#484848" />
                      <path d="M8 7V3M8 7l3-2" stroke="#202020" />
                      <path d={i ? "M8 9h3V7l4 3-4 3v-2H8Z" : "M1 4h3V2l4 3-4 3V6H1Z"} fill={c} />
                      <path d="M18 6h5l-2.500 3Z" fill="#202020" />
                    </Glyph>
                  </ActionButton>
                ))}
              </ButtonGrid>
            </Group>
          </Groups>
        </Panel>

        <StatusBar>
          <StatusCell $w={107}>USB Осциллограф <Version>2.01.6422</Version></StatusCell>
          <StatusCell />
          <StatusCell $w={28}>2.1</StatusCell>
        </StatusBar>
      </Window>
    </>
  );
}
